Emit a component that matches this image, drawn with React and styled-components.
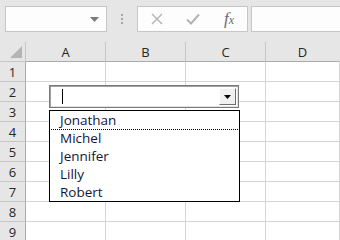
import React from "react";
import styled, { createGlobalStyle } from "styled-components";

const GlobalStyle = createGlobalStyle`
  html, body { margin: 0; padding: 0; background: #ffffff; }
  body { font-family: "Open Sans", "Noto Sans", sans-serif; overflow: hidden; }
`;

const Page = styled.div`
  width: 340px;
  height: 240px;
  overflow: hidden;
  background: #ffffff;
`;

const Toolbar = styled.div`
  height: 42px;
  background: #e6e6e6;
  display: flex;
  align-items: flex-start;
  padding-top: 6px;
  padding-left: 5px;
  box-sizing: border-box;
`;

const NameBox = styled.div`
  width: 102px;
  height: 26px;
  box-sizing: border-box;
  background: #fdfdfd;
  border: 1px solid #c6c6c6;
  display: flex;
  align-items: center;
  justify-content: flex-end;
  padding-right: 7px;
`;

const Dots = styled.div`
  width: 30px;
  height: 26px;
  display: flex;
  flex-direction: column;
  align-items: center;
  justify-content: center;
  gap: 2px;
  span {
    width: 2px;
    height: 2px;
    background: #a6a6a6;
  }
`;

const ButtonsBox = styled.div`
  width: 111px;
  height: 26px;
  box-sizing: border-box;
  background: #fdfdfd;
  border: 1px solid #c6c6c6;
  display: grid;
  grid-template-columns: 37px 36px 1fr;
  align-items: center;
  justify-items: center;
`;

const Fx = styled.span`
  font-family: "Liberation Serif", "DejaVu Serif", serif;
  font-style: italic;
  font-size: 17px;
  color: #6b6b6b;
  line-height: 1;
  margin-top: -2px;
  span { font-size: 12px; }
`;

const FormulaInput = styled.div`
  flex: 1;
  height: 26px;
  margin-left: 3px;
  box-sizing: border-box;
  background: #fdfdfd;
  border: 1px solid #c6c6c6;
  border-right: none;
`;

const Sheet = styled.div`
  position: relative;
  display: grid;
  grid-template-columns: 26px 80px 80px 80px 1fr;
  grid-auto-rows: 20px;
  grid-template-rows: 20px;
  font-family: "Open Sans", "Noto Sans", sans-serif;
`;

const Corner = styled.div`
  background: #e6e6e6;
  border-right: 1px solid #c6c6c6;
  border-bottom: 1px solid #c6c6c6;
  position: relative;
  box-sizing: border-box;
`;

const CornerTriangle = styled.div`
  position: absolute;
  right: 3px;
  bottom: 3px;
  width: 0;
  height: 0;
  border-left: 12px solid transparent;
  border-bottom: 12px solid #b4b4b4;
`;

const ColHeader = styled.div`
  background: #e6e6e6;
  border-right: 1px solid ${(p) => (p.$last ? "transparent" : "#c6c6c6")};
  border-bottom: 1px solid #ababab;
  box-sizing: border-box;
  display: flex;
  align-items: center;
  justify-content: center;
  font-size: 13px;
  color: #262626;
  padding-top: 1px;
`;

const RowHeader = styled.div`
  background: #e6e6e6;
  border-right: 1px solid #ababab;
  border-bottom: 1px solid #c6c6c6;
  box-sizing: border-box;
  display: flex;
  align-items: center;
  justify-content: center;
  font-size: 13px;
  color: #262626;
`;

const Cell = styled.div`
  border-right: 1px solid #d4d4d4;
  border-bottom: 1px solid #d4d4d4;
  box-sizing: border-box;
  background: #ffffff;
`;

const Combo = styled.div`
  position: absolute;
  left: 49px;
  top: 43px;
  width: 190px;
  height: 23px;
  box-sizing: border-box;
  border: 1px solid #7a7a7a;
  background: #ffffff;
  box-shadow: inset 1px 1px 0 #a0a0a0, inset -1px -1px 0 #e3e3e3;
  display: flex;
  align-items: stretch;
  padding: 2px;
`;

const Caret = styled.div`
  width: 1px;
  height: 15px;
  background: #000;
  margin-left: 10px;
  align-self: center;
`;

const DropButton = styled.div`
  margin-left: auto;
  width: 17px;
  box-sizing: border-box;
  background: #f0f0f0;
  border-top: 1px solid #ffffff;
  border-left: 1px solid #ffffff;
  border-right: 1px solid #6f6f6f;
  border-bottom: 1px solid #6f6f6f;
  display: flex;
  align-items: center;
  justify-content: center;
`;

const List = styled.div`
  position: absolute;
  left: 49px;
  top: 68px;
  width: 191px;
  box-sizing: border-box;
  border: 1px solid #000;
  background: #ffffff;
  display: flex;
  flex-direction: column;
`;

const Item = styled.div`
  height: 18px;
  box-sizing: border-box;
  padding-left: 10px;
  font-family: "Open Sans", "Noto Sans", sans-serif;
  font-size: 13.5px;
  font-weight: 500;
  line-height: 18px;
  color: #14143a;
  white-space: nowrap;
  outline: ${(p) => (p.$focused ? "1px dotted #000" : "none")};
  outline-offset: 0px;
`;

const columns = ["A", "B", "C", "D"];
const rows = [1, 2, 3, 4, 5, 6, 7, 8, 9];
const names = ["Jonathan", "Michel", "Jennifer", "Lilly", "Robert"];

export default function App() {
  return (
    <Page>
      <GlobalStyle />
      <Toolbar>
        <NameBox>
          <svg width="9" height="5" viewBox="0 0 9 5">
            <path d="M0 0 H9 L4.5 5 Z" fill="#7a7a7a" />
          </svg>
        </NameBox>
        <Dots>
          <span />
          <span />
          <span />
        </Dots>
        <ButtonsBox>
          <svg width="12" height="12" viewBox="0 0 12 12">
            <path d="M1 1 L11 11 M11 1 L1 11" stroke="#b3b3b3" strokeWidth="1.4" fill="none" />
          </svg>
          <svg width="14" height="12" viewBox="0 0 14 12">
            <path d="M1 6.5 L5 10.5 L13 1.5" stroke="#b3b3b3" strokeWidth="2" fill="none" />
          </svg>
          <Fx>
            f<span>x</span>
          </Fx>
        </ButtonsBox>
        <FormulaInput />
      </Toolbar>
      <Sheet>
        <Corner>
          <CornerTriangle />
        </Corner>
        {columns.map((c, i) => (
          <ColHeader key={c} $last={i === columns.length - 1}>
            {c}
          </ColHeader>
        ))}
        {rows.map((r) => (
          <React.Fragment key={r}>
            <RowHeader>{r}</RowHeader>
            {columns.map((c) => (
              <Cell key={c} />
            ))}
          </React.Fragment>
        ))}
        <Combo>
          <Caret />
          <DropButton>
            <svg width="7" height="4" viewBox="0 0 7 4">
              <path d="M0 0 H7 L3.5 4 Z" fill="#000" />
            </svg>
          </DropButton>
        </Combo>
        <List>
          {names.map((n, i) => (
            <Item key={n} $focused={i === 0}>
              {n}
            </Item>
          ))}
        </List>
      </Sheet>
    </Page>
  );
}
